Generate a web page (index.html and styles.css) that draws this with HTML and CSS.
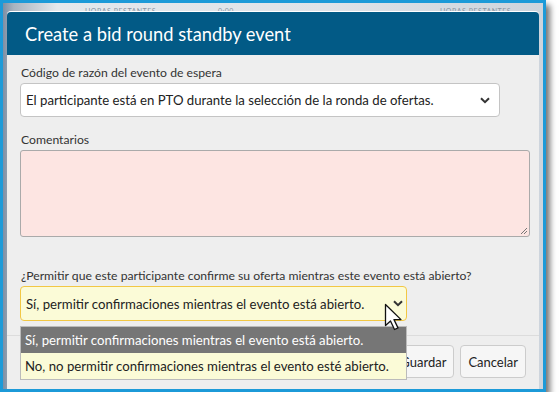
FILE: index.html
```html
<!DOCTYPE html>
<html lang="es">
<head>
    <meta charset="UTF-8">
    <title>Create a bid round standby event</title>
    <link rel="stylesheet" href="styles.css">
</head>
<body>
    <div class="frame">
        <div class="backdrop">
            <span class="ghost">HORAS RESTANTES</span>
            <span class="ghost mid">0:00</span>
            <span class="ghost right">HORAS RESTANTES</span>
        </div>
        <div class="modal">
            <header class="modal-head">
                <h1>Create a bid round standby event</h1>
            </header>
            <main class="modal-body">
                <label class="field-label" for="reason">Código de razón del evento de espera</label>
                <div class="select reason">
                    <span>El participante está en PTO durante la selección de la ronda de ofertas.</span>
                    <svg class="chev" width="10" height="7" viewBox="0 0 10 7"><path d="M1 1.2 5 5.2 9 1.2" fill="none" stroke="#333" stroke-width="2"/></svg>
                </div>

                <label class="field-label" for="comments">Comentarios</label>
                <div class="textarea" id="comments">
                    <svg class="grip" width="8" height="8" viewBox="0 0 8 8"><path d="M7 1 1 7M7 4 4 7" stroke="#777" stroke-width="1"/></svg>
                </div>

                <label class="field-label question">¿Permitir que este participante confirme su oferta mientras este evento está abierto?</label>
                <div class="select confirm">
                    <span>Sí, permitir confirmaciones mientras el evento está abierto.</span>
                    <svg class="chev" width="10" height="7" viewBox="0 0 10 7"><path d="M1 1.2 5 5.2 9 1.2" fill="none" stroke="#333" stroke-width="2"/></svg>
                    <ul class="options">
                        <li class="picked">Sí, permitir confirmaciones mientras el evento está abierto.</li>
                        <li>No, no permitir confirmaciones mientras el evento esté abierto.</li>
                    </ul>
                    <svg class="cursor" width="22" height="30" viewBox="0 0 22 30">
                        <path d="M1.5 1.5v21l5-4.5 4 8.5 3.5-1.6-4-8.3h7z" fill="#fff" stroke="#111" stroke-width="1.3" stroke-linejoin="round"/>
                    </svg>
                </div>
            </main>
            <footer class="modal-foot">
                <button>Guardar</button>
                <button>Cancelar</button>
            </footer>
        </div>
    </div>
</body>
</html>
```

FILE: styles.css
```css
body {
    margin: 0;
    background: #fff;
    font-family: Lato, "Open Sans", sans-serif;
}
.frame {
    position: relative;
    width: 540px;
    height: 386px;
    border: 3px solid #1c9ad8;
    box-shadow: 4px 5px 6px rgba(0, 0, 0, 0.55);
    overflow: hidden;
    background: #8e9aa8;
}
.backdrop {
    position: absolute;
    inset: 0;
    background: linear-gradient(90deg, #7d8fa4 0, #a9b4c0 2%, #e4e8ec 10%, #dfe3e8 60%, #cdd4dc 100%);
}
.ghost {
    position: absolute;
    top: 4px;
    left: 82px;
    font-size: 7px;
    color: #8a96a4;
    letter-spacing: 0.5px;
}
.ghost.mid { left: 215px; }
.ghost.right { left: 437px; }
.modal {
    position: relative;
    margin: 8px 4px 0 4px;
    height: 400px;
    background: #eeeeee;
    border-top: 1px solid #fff;
    border-radius: 4px 4px 0 0;
}
.modal-head {
    background: #025a86;
    height: 43px;
    border-radius: 4px 4px 0 0;
    display: flex;
    align-items: center;
    padding-left: 18px;
}
.modal-head h1 {
    margin: 0;
    color: #fff;
    font-size: 18.3px;
    font-weight: normal;
}
.modal-body {
    padding: 10px 8px 0 13px;
    color: #333;
}
.field-label {
    display: block;
    font-size: 12.2px;
    line-height: 16px;
    margin: 0 0 2px 1px;
}
.select {
    position: relative;
    box-sizing: border-box;
    height: 34px;
    background: #fff;
    border: 1px solid #c4c4c4;
    border-radius: 4px;
    display: flex;
    align-items: center;
    padding: 0 9px 0 5px;
    font-size: 13.2px;
    color: #222;
}
.select span { flex: 1; white-space: nowrap; }
.select.reason {
    width: 480px;
    margin-bottom: 15px;
}
.textarea {
    position: relative;
    box-sizing: border-box;
    width: 510px;
    height: 87px;
    background: #fde5e2;
    border: 1px solid #aaa;
    border-radius: 3px;
    margin-bottom: 31px;
}
.grip {
    position: absolute;
    right: 1px;
    bottom: 1px;
}
.select.confirm {
    width: 387px;
    height: 35px;
    background: #fbfbd7;
    border-color: #f2c744;
    padding-right: 3px;
}
.options {
    position: absolute;
    z-index: 2;
    top: 39px;
    left: -1px;
    width: 387px;
    margin: 0;
    padding: 0;
    list-style: none;
    border: 1px solid #bbb;
    box-sizing: border-box;
    background: #fbfbd7;
}
.options li {
    height: 26px;
    line-height: 26px;
    padding-left: 4px;
    font-size: 13.2px;
    color: #222;
    white-space: nowrap;
}
.options li.picked {
    background: #767676;
    color: #fff;
}
.cursor {
    position: absolute;
    z-index: 3;
    left: 363px;
    top: 16px;
}
.modal-foot {
    margin-top: 14px;
    border-top: 1px solid #dcdcdc;
    display: flex;
    justify-content: flex-end;
    gap: 6px;
    padding: 9px 13px 0 0;
}
.modal-foot button {
    height: 33px;
    padding: 0 7px;
    background: #f6f6f6;
    border: 1px solid #ccc;
    border-radius: 4px;
    font-family: inherit;
    font-size: 13px;
    color: #222;
}
```
